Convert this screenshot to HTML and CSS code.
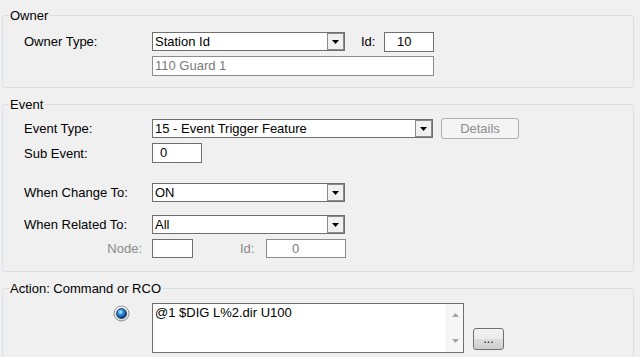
FILE: index.html
```html
<!DOCTYPE html>
<html lang="en">
<head>
    <meta charset="UTF-8">
    <title>Event Action</title>
    <link rel="stylesheet" href="styles.css">
</head>
<body>
    <fieldset class="group owner">
        <legend>Owner</legend>
        <div class="inner">
            <div class="row h19">
                <span class="lbl">Owner Type:</span>
                <div class="combo w193"><span class="val">Station Id</span><span class="drop"><svg width="7" height="4" viewBox="0 0 7 4"><path d="M0 0h7l-3.5 4z" fill="#000"/></svg></span></div>
                <span class="lbl-id owner-id">Id:</span>
                <div class="box w50 pl-12">10</div>
            </div>
            <div class="row h20 mt5">
                <span class="lbl"></span>
                <div class="box w282 off">110 Guard 1</div>
            </div>
        </div>
    </fieldset>

    <fieldset class="group event">
        <legend>Event</legend>
        <div class="inner">
            <div class="row h21">
                <span class="lbl">Event Type:</span>
                <div class="combo w281"><span class="val">15 - Event Trigger Feature</span><span class="drop"><svg width="7" height="4" viewBox="0 0 7 4"><path d="M0 0h7l-3.5 4z" fill="#000"/></svg></span></div>
                <div class="btn-details">Details</div>
            </div>
            <div class="row h20 mt4">
                <span class="lbl">Sub Event:</span>
                <div class="box w50 pl-7">0</div>
            </div>
            <div class="row h19 mt20">
                <span class="lbl">When Change To:</span>
                <div class="combo w193"><span class="val">ON</span><span class="drop"><svg width="7" height="4" viewBox="0 0 7 4"><path d="M0 0h7l-3.5 4z" fill="#000"/></svg></span></div>
            </div>
            <div class="row h19 mt13">
                <span class="lbl">When Related To:</span>
                <div class="combo w193"><span class="val">All</span><span class="drop"><svg width="7" height="4" viewBox="0 0 7 4"><path d="M0 0h7l-3.5 4z" fill="#000"/></svg></span></div>
            </div>
            <div class="row h19 mt5">
                <span class="lbl right off-txt">Node:</span>
                <div class="box w41 h19"></div>
                <span class="lbl-id node-id off-txt">Id:</span>
                <div class="box w80 h19 off pl-25">0</div>
            </div>
        </div>
    </fieldset>

    <fieldset class="group action">
        <legend>Action: Command or RCO</legend>
        <div class="inner">
            <div class="row top">
                <span class="lbl radio-cell">
                    <svg width="17" height="17" viewBox="0 0 17 17">
                        <defs>
                            <linearGradient id="ring" x1="0" y1="0" x2="0" y2="1">
                                <stop offset="0" stop-color="#fafafa"/>
                                <stop offset="1" stop-color="#d8d8d8"/>
                            </linearGradient>
                            <radialGradient id="ball" cx="40%" cy="35%" r="65%">
                                <stop offset="0" stop-color="#d0f0ff"/>
                                <stop offset="0.4" stop-color="#2f95e2"/>
                                <stop offset="1" stop-color="#08306a"/>
                            </radialGradient>
                        </defs>
                        <circle cx="8.5" cy="8.5" r="7.5" fill="url(#ring)" stroke="#8c8e90"/>
                        <circle cx="8.5" cy="8.5" r="5" fill="url(#ball)" stroke="#15305a" stroke-width="0.8"/>
                    </svg>
                </span>
                <div class="memo">
                    <div class="txt">@1 $DIG L%2.dir U100</div>
                    <div class="scroll">
                        <svg width="7" height="4" viewBox="0 0 7 4"><path d="M0 4h7l-3.5-4z" fill="#a6a6a6"/></svg>
                        <svg width="7" height="4" viewBox="0 0 7 4"><path d="M0 0h7l-3.5 4z" fill="#a6a6a6"/></svg>
                    </div>
                </div>
                <div class="btn-more">...</div>
            </div>
        </div>
    </fieldset>
</body>
</html>
```

FILE: styles.css
```css
html, body{
    height: 357px;
    overflow: hidden;
}
body{
    margin: 0;
    background-color: #f0f0f0;
    font-family: "Liberation Sans", Arial, sans-serif;
    font-size: 13px;
    color: #000;
}
.group{
    margin: 0 6px 9px 2px;
    padding: 0;
    border: 1px solid #d5dfe5;
    border-radius: 3px;
    min-width: 0;
}
.owner{
    margin-top: 8px;
}
legend{
    margin-left: 6px;
    padding: 0 1px;
    line-height: 15px;
}
.inner{
    padding-left: 21px;
}
.owner .inner{
    padding-top: 9px;
    padding-bottom: 11px;
}
.event .inner{
    padding-top: 6px;
    padding-bottom: 13px;
}
.action .inner{
    padding-top: 7px;
    padding-bottom: 4px;
}
.row{
    display: flex;
    align-items: center;
}
.row.top{
    align-items: flex-start;
}
.h19{ height: 19px; }
.h20{ height: 20px; }
.h21{ height: 21px; }
.mt4{ margin-top: 4px; }
.mt5{ margin-top: 5px; }
.mt13{ margin-top: 13px; }
.mt20{ margin-top: 20px; }
.lbl{
    width: 128px;
    flex: none;
    white-space: nowrap;
}
.lbl.right{
    text-align: right;
    box-sizing: border-box;
    padding-right: 10px;
}
.off-txt{
    color: #8a8a8a;
}
.lbl-id{
    flex: none;
}
.owner-id{
    margin-left: 16px;
    width: 23px;
}
.node-id{
    margin-left: 47px;
    width: 26px;
}
/* combo box */
.combo{
    display: flex;
    box-sizing: border-box;
    height: 19px;
    border: 1px solid #707070;
    background-color: #fff;
    flex: none;
}
.combo .val{
    flex: 1;
    padding-left: 2px;
    line-height: 17px;
    white-space: nowrap;
    overflow: hidden;
}
.combo .drop{
    box-sizing: border-box;
    width: 17px;
    height: 17px;
    border: 1px solid #8a8a8a;
    background-color: #f0f0f0;
    display: flex;
    align-items: center;
    justify-content: center;
}
.w193{ width: 193px; }
.w281{ width: 281px; }
/* text box */
.box{
    box-sizing: border-box;
    height: 20px;
    border: 1px solid #707070;
    background-color: #fff;
    line-height: 18px;
    flex: none;
    white-space: nowrap;
}
.box.h19{
    height: 19px;
    line-height: 17px;
}
.box.off{
    color: #7a7a7a;
    border-color: #8c8c8c;
    padding-left: 2px;
}
.w41{ width: 41px; }
.w50{ width: 50px; }
.w80{ width: 80px; }
.w282{ width: 282px; }
.pl-7{ padding-left: 7px; }
.pl-12{ padding-left: 12px; }
.box.pl-25{ padding-left: 25px; }
.btn-details{
    box-sizing: border-box;
    margin-left: 8px;
    width: 78px;
    height: 21px;
    border: 1px solid #adb2b5;
    border-radius: 3px;
    background-color: #f4f4f4;
    color: #8d8d8d;
    text-align: center;
    line-height: 19px;
}
/* action */
.radio-cell{
    box-sizing: border-box;
    padding-left: 89px;
    padding-top: 2px;
    height: 19px;
}
.radio-cell svg{
    display: block;
}
.memo{
    box-sizing: border-box;
    width: 312px;
    height: 50px;
    border: 1px solid #707070;
    background-color: #fff;
    display: flex;
    flex: none;
}
.memo .txt{
    flex: 1;
    padding: 1px 2px;
    line-height: 15px;
}
.memo .scroll{
    width: 17px;
    background-color: #f6f6f6;
    border-left: 1px solid #ededed;
    display: flex;
    flex-direction: column;
    justify-content: space-between;
    align-items: center;
    padding: 9px 0 9px;
    box-sizing: border-box;
}
.memo .scroll svg{
    display: block;
}
.btn-more{
    box-sizing: border-box;
    margin-left: 9px;
    margin-top: 25px;
    width: 31px;
    height: 22px;
    border: 1px solid #707070;
    border-radius: 3px;
    background: linear-gradient(#f2f2f2 0, #ebebeb 50%, #dddddd 50%, #cfcfcf 100%);
    text-align: center;
    line-height: 20px;
    font-size: 12px;
}
```
